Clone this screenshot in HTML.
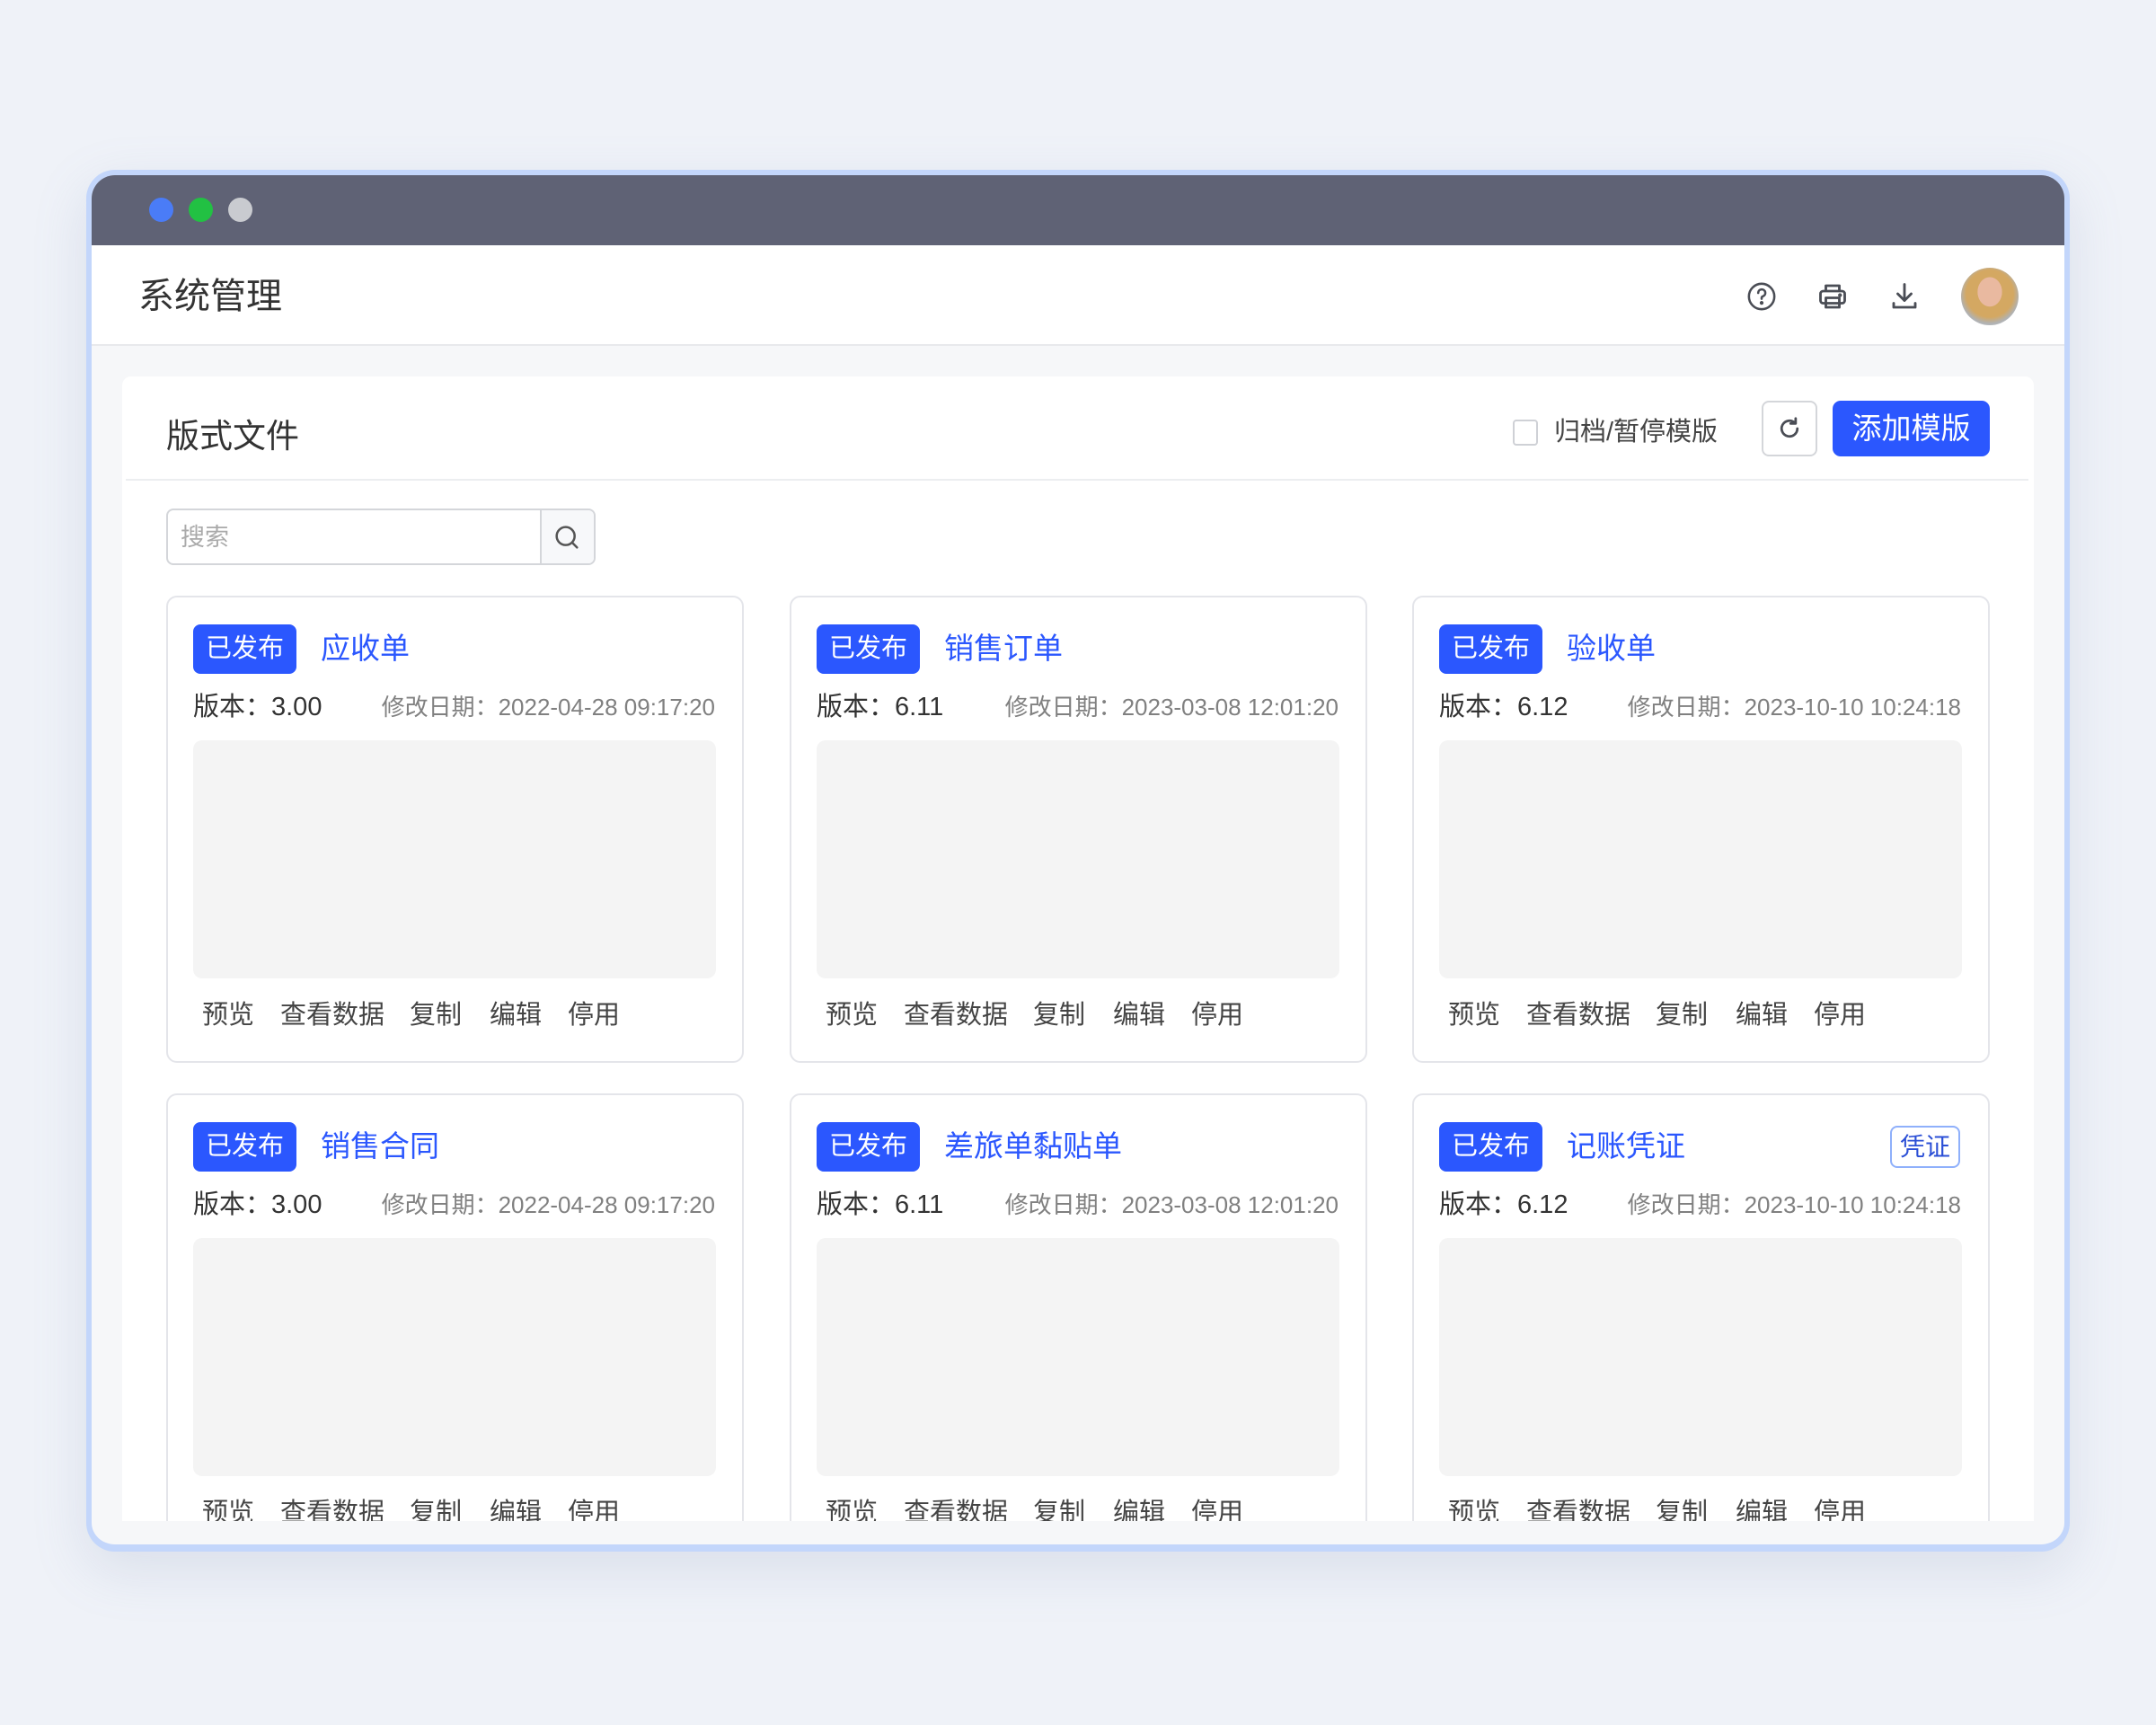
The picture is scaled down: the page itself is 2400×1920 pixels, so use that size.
<!DOCTYPE html>
<html><head><meta charset="utf-8"><style>
*{margin:0;padding:0;box-sizing:border-box}
body{width:2400px;height:1920px;background:#eff2f8;font-family:"Liberation Sans","Noto Sans CJK SC",sans-serif;position:relative;overflow:hidden}
.a{position:absolute}
.win{left:96px;top:189px;width:2208px;height:1538px;border:6px solid #c3d6fb;border-bottom-width:8px;border-radius:32px;background:#f6f7f9;overflow:hidden;box-shadow:0 20px 60px rgba(120,140,180,.18)}
.tb{left:0;top:0;width:100%;height:78px;background:#5f6275}
.dot{width:27px;height:27px;border-radius:50%;top:25px}
.hd{left:0;top:78px;width:100%;height:112px;background:#fff;border-bottom:2px solid #e8e9ec}
.panel{left:34px;top:224px;width:2128px;height:1274px;background:#fff;border-radius:10px 10px 0 0;overflow:hidden}
.card{width:643px;height:520px;border:2px solid #e4e5ea;border-radius:12px;background:#fff}
.tag{left:28px;top:30px;width:115px;height:55px;background:#2b57fe;color:#fff;border-radius:8px;font-size:29px;line-height:55px;text-align:center}
.nm{left:170px;top:28px;font-size:33px;line-height:58px;color:#2b57fe}
.ver{left:28px;top:103px;font-size:29px;line-height:38px;color:#333}
.dt{right:30px;top:104px;font-size:26px;line-height:36px;color:#808080}
.pv{left:28px;top:159px;width:582px;height:265px;background:#f4f4f4;border-radius:10px}
.act{top:445px;font-size:29px;line-height:40px;color:#444}
</style></head><body>
<div class="a win">
 <div class="a tb">
  <div class="a dot" style="left:64px;background:#4a7cf7"></div>
  <div class="a dot" style="left:108px;background:#22c143"></div>
  <div class="a dot" style="left:152px;background:#c9cbd0"></div>
 </div>
 <div class="a hd">
  <div class="a" style="left:52px;top:31px;font-size:40px;line-height:52px;color:#333">系统管理</div>
  <svg class="a" style="left:1842px;top:40px" width="34" height="34" viewBox="0 0 24 24" fill="none" stroke="#4a4d55" stroke-width="1.8" stroke-linecap="round"><circle cx="12" cy="12" r="10"/><path d="M9.3 9.2a2.8 2.8 0 1 1 3.6 2.7c-.6.2-.9.7-.9 1.3v.6"/><circle cx="12" cy="17" r=".6" fill="#4a4d55"/></svg>
  <svg class="a" style="left:1920px;top:39px" width="36" height="36" viewBox="0 0 24 24" fill="none" stroke="#4a4d55" stroke-width="1.9" stroke-linejoin="round"><path d="M7 8V4h10v4"/><rect x="3" y="8" width="18" height="9" rx="2"/><rect x="7" y="13" width="10" height="7"/><circle cx="17.5" cy="11" r=".5" fill="#4a4d55"/></svg>
  <svg class="a" style="left:2000px;top:39px" width="36" height="36" viewBox="0 0 24 24" fill="none" stroke="#4a4d55" stroke-width="1.9" stroke-linecap="round" stroke-linejoin="round"><path d="M12 3v12M7 10l5 5 5-5M4 17v3h16v-3"/></svg>
  <div class="a" style="left:2081px;top:25px;width:64px;height:64px;border-radius:50%;background:radial-gradient(ellipse 30% 36% at 50% 42%,#e9b9a0 0 70%,transparent 72%),radial-gradient(circle at 50% 45%,#d4a862 0 55%,#b0b2b4 70%,#dcdcda 100%)"></div>
 </div>
 <div class="a panel">
  <div class="a" style="left:49px;top:42px;font-size:37px;line-height:50px;color:#333">版式文件</div>
  <div class="a" style="left:1548px;top:48px;width:28px;height:29px;border:2px solid #cfd1d6;border-radius:4px;background:#fff"></div>
  <div class="a" style="left:1594px;top:41px;font-size:29px;line-height:42px;color:#444">归档/暂停模版</div>
  <div class="a" style="left:1825px;top:27px;width:62px;height:62px;border:2px solid #d4d6da;border-radius:8px;background:#fff"></div>
  <svg class="a" style="left:1841px;top:43px" width="30" height="30" viewBox="0 0 24 24" fill="none" stroke="#4a4d55" stroke-width="2.2" stroke-linecap="round"><path d="M19 12a7 7 0 1 1-2.2-5.1"/><path d="M17.5 3v4.5H13" stroke-linejoin="round"/></svg>
  <div class="a" style="left:1904px;top:27px;width:175px;height:62px;background:#2b57fe;border-radius:9px;color:#fff;font-size:33px;line-height:62px;text-align:center">添加模版</div>
  <div class="a" style="left:4px;top:114px;width:2118px;height:2px;background:#eceef0"></div>
  <div class="a" style="left:49px;top:147px;width:478px;height:63px;border:2px solid #d4d6da;border-radius:8px;background:#fff;overflow:hidden">
   <div class="a" style="left:14px;top:10px;font-size:27px;line-height:40px;color:#aaa">搜索</div>
   <div class="a" style="left:414px;top:0;width:64px;height:63px;border-left:2px solid #d4d6da;background:#f7f8fa"></div>
   <svg class="a" style="left:428px;top:14px" width="32" height="32" viewBox="0 0 24 24" fill="none" stroke="#555" stroke-width="1.9" stroke-linecap="round"><circle cx="11" cy="11" r="7.5"/><path d="M16.5 16.5l4 4"/></svg>
  </div>
  <div class="a card" style="left:49px;top:244px"><div class="a tag">已发布</div><div class="a nm">应收单</div><div class="a ver">版本：3.00</div><div class="a dt">修改日期：2022-04-28 09:17:20</div><div class="a pv"></div><div class="a act" style="left:38px">预览</div><div class="a act" style="left:125px">查看数据</div><div class="a act" style="left:269px">复制</div><div class="a act" style="left:358px">编辑</div><div class="a act" style="left:445px">停用</div></div>
  <div class="a card" style="left:743px;top:244px"><div class="a tag">已发布</div><div class="a nm">销售订单</div><div class="a ver">版本：6.11</div><div class="a dt">修改日期：2023-03-08 12:01:20</div><div class="a pv"></div><div class="a act" style="left:38px">预览</div><div class="a act" style="left:125px">查看数据</div><div class="a act" style="left:269px">复制</div><div class="a act" style="left:358px">编辑</div><div class="a act" style="left:445px">停用</div></div>
  <div class="a card" style="left:1436px;top:244px"><div class="a tag">已发布</div><div class="a nm">验收单</div><div class="a ver">版本：6.12</div><div class="a dt">修改日期：2023-10-10 10:24:18</div><div class="a pv"></div><div class="a act" style="left:38px">预览</div><div class="a act" style="left:125px">查看数据</div><div class="a act" style="left:269px">复制</div><div class="a act" style="left:358px">编辑</div><div class="a act" style="left:445px">停用</div></div>
  <div class="a card" style="left:49px;top:798px"><div class="a tag">已发布</div><div class="a nm">销售合同</div><div class="a ver">版本：3.00</div><div class="a dt">修改日期：2022-04-28 09:17:20</div><div class="a pv"></div><div class="a act" style="left:38px">预览</div><div class="a act" style="left:125px">查看数据</div><div class="a act" style="left:269px">复制</div><div class="a act" style="left:358px">编辑</div><div class="a act" style="left:445px">停用</div></div>
  <div class="a card" style="left:743px;top:798px"><div class="a tag">已发布</div><div class="a nm">差旅单黏贴单</div><div class="a ver">版本：6.11</div><div class="a dt">修改日期：2023-03-08 12:01:20</div><div class="a pv"></div><div class="a act" style="left:38px">预览</div><div class="a act" style="left:125px">查看数据</div><div class="a act" style="left:269px">复制</div><div class="a act" style="left:358px">编辑</div><div class="a act" style="left:445px">停用</div></div>
  <div class="a card" style="left:1436px;top:798px"><div class="a tag">已发布</div><div class="a nm">记账凭证</div><div class="a" style="right:31px;top:34px;width:78px;height:47px;border:2px solid #8fb0fb;border-radius:8px;color:#2b4fd6;font-size:28px;line-height:43px;text-align:center">凭证</div><div class="a ver">版本：6.12</div><div class="a dt">修改日期：2023-10-10 10:24:18</div><div class="a pv"></div><div class="a act" style="left:38px">预览</div><div class="a act" style="left:125px">查看数据</div><div class="a act" style="left:269px">复制</div><div class="a act" style="left:358px">编辑</div><div class="a act" style="left:445px">停用</div></div>
 </div>
</div>
</body></html>
